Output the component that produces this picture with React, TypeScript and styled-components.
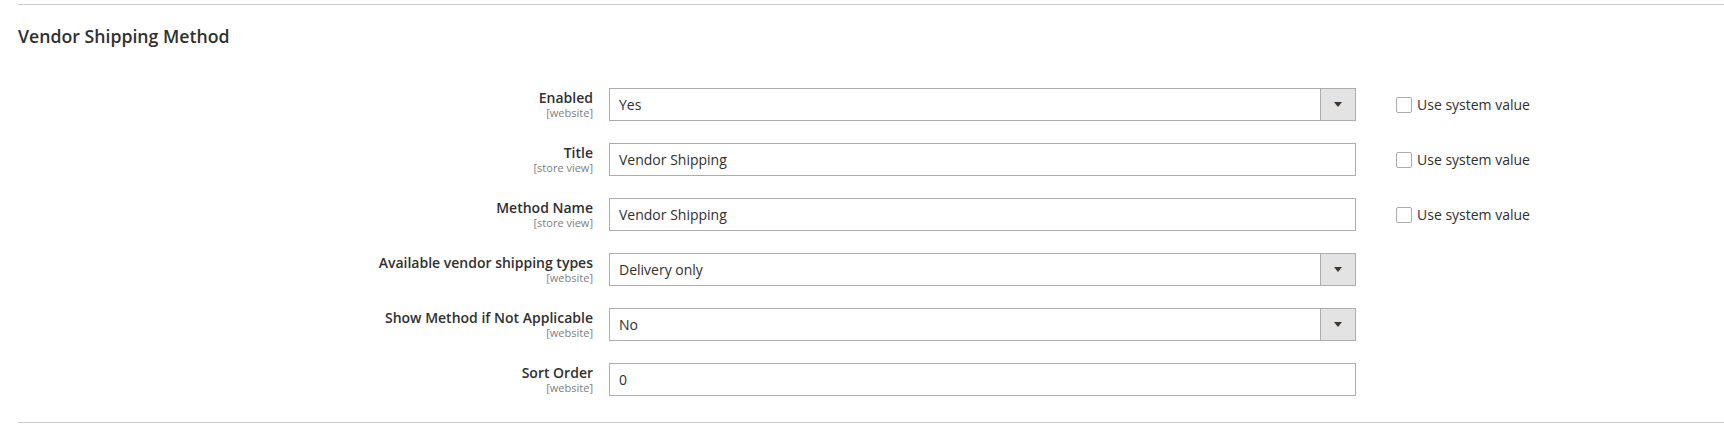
import React from "react";
import styled, { createGlobalStyle } from "styled-components";

const GlobalStyle = createGlobalStyle`
  body {
    margin: 0;
    background: #fff;
    font-family: "Open Sans", "Liberation Sans", sans-serif;
    color: #303030;
  }
`;

const Section = styled.section`
  margin: 4px 0 0 18px;
  border-top: 1px solid #cccccc;
  border-bottom: 1px solid #cccccc;
  padding-bottom: 26px;
`;

const SectionTitle = styled.h2`
  margin: 0;
  padding-top: 19px;
  font-size: 17.7px;
  line-height: 24px;
  font-weight: 600;
  color: #303030;
`;

const Fields = styled.div`
  display: flex;
  flex-direction: column;
  gap: 22px;
  margin-top: 40px;
`;

const FieldRow = styled.div`
  display: flex;
  align-items: flex-start;
`;

const Label = styled.label`
  width: 575px;
  margin-right: 16px;
  text-align: right;
  display: flex;
  flex-direction: column;
  align-items: flex-end;
`;

const LabelText = styled.span`
  font-size: 14px;
  line-height: 19px;
  font-weight: 600;
  color: #303030;
`;

const Scope = styled.span`
  font-size: 11px;
  line-height: 12px;
  color: #808080;
`;

const Control = styled.div`
  box-sizing: border-box;
  width: 747px;
  height: 33px;
  border: 1px solid #adadad;
  background: #fff;
  display: flex;
  align-items: stretch;
`;

const Value = styled.span`
  flex: 1;
  display: flex;
  align-items: center;
  padding-left: 9px;
  font-size: 14px;
  color: #303030;
`;

const ArrowButton = styled.span`
  width: 34px;
  background: #e3e3e3;
  border-left: 1px solid #adadad;
  display: flex;
  align-items: center;
  justify-content: center;
`;

const Arrow = styled.span`
  width: 0;
  height: 0;
  border-left: 4px solid transparent;
  border-right: 4px solid transparent;
  border-top: 5px solid #41362f;
`;

const UseDefault = styled.label`
  margin-left: 40px;
  height: 33px;
  display: flex;
  align-items: center;
  gap: 5px;
  font-size: 14px;
  color: #303030;
`;

const Checkbox = styled.span`
  box-sizing: border-box;
  width: 16px;
  height: 16px;
  border: 1px solid #adadad;
  border-radius: 2px;
  background: #fff;
`;

type Field = {
  label: string;
  scope: string;
  value: string;
  select?: boolean;
  useDefault?: boolean;
};

const fields: Field[] = [
  { label: "Enabled", scope: "[website]", value: "Yes", select: true, useDefault: true },
  { label: "Title", scope: "[store view]", value: "Vendor Shipping", useDefault: true },
  { label: "Method Name", scope: "[store view]", value: "Vendor Shipping", useDefault: true },
  { label: "Available vendor shipping types", scope: "[website]", value: "Delivery only", select: true },
  { label: "Show Method if Not Applicable", scope: "[website]", value: "No", select: true },
  { label: "Sort Order", scope: "[website]", value: "0" },
];

const App = () => (
  <>
    <GlobalStyle />
    <Section>
      <SectionTitle>Vendor Shipping Method</SectionTitle>
      <Fields>
        {fields.map((f) => (
          <FieldRow key={f.label}>
            <Label>
              <LabelText>{f.label}</LabelText>
              <Scope>{f.scope}</Scope>
            </Label>
            <Control>
              <Value>{f.value}</Value>
              {f.select && (
                <ArrowButton>
                  <Arrow />
                </ArrowButton>
              )}
            </Control>
            {f.useDefault && (
              <UseDefault>
                <Checkbox />
                Use system value
              </UseDefault>
            )}
          </FieldRow>
        ))}
      </Fields>
    </Section>
  </>
);

export default App;
